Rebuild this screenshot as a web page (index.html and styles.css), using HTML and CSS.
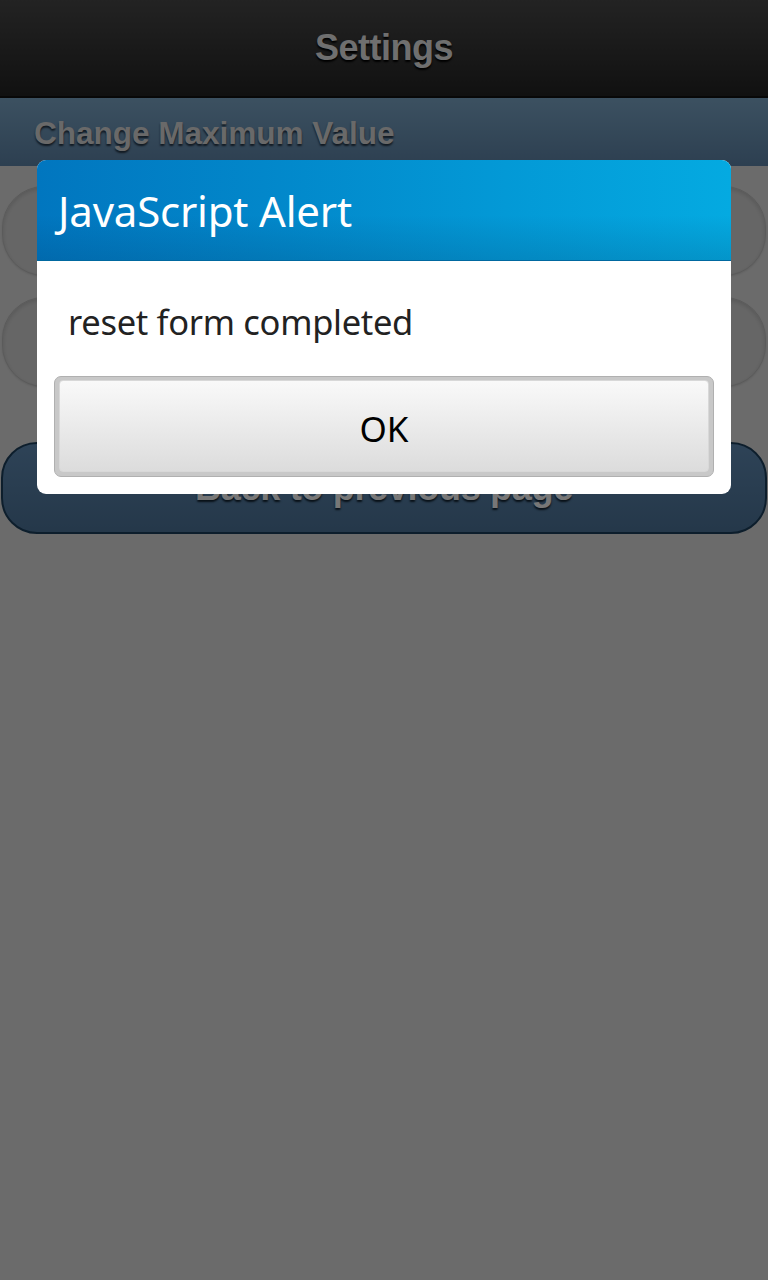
FILE: index.html
```html
<!DOCTYPE html>
<html>
<head>
<meta charset="utf-8">
<link rel="stylesheet" href="styles.css">
</head>
<body>
<div class="page">
  <header class="topbar"><h1 class="title">Settings</h1></header>
  <div class="section-bar">Change Maximum Value</div>
  <div class="content">
    <div class="field"></div>
    <div class="field"></div>
    <div class="back-btn">Back to previous page</div>
  </div>
</div>
<div class="dim"></div>
<div class="dialog">
  <div class="dialog-head">JavaScript Alert</div>
  <div class="dialog-body">
    <p class="message">reset form completed</p>
    <div class="ok-wrap"><div class="ok-btn">OK</div></div>
  </div>
</div>
</body>
</html>
```
FILE: styles.css
```css
html, body {
  margin: 0;
  padding: 0;
  width: 768px;
  height: 1280px;
  overflow: hidden;
  background: #d6d6d6;
}
.page {
  width: 768px;
  height: 1280px;
  background: #d6d6d6;
  font-family: "Liberation Sans", Arial, sans-serif;
}
.topbar {
  height: 96px;
  background: linear-gradient(to bottom, #464646, #222222);
  border-bottom: 2px solid #111;
  display: flex;
  align-items: center;
  justify-content: center;
}
.title {
  margin: 0;
  font-size: 36px;
  font-weight: bold;
  color: #dedede;
  text-shadow: 0 2px 2px #000;
  letter-spacing: -0.5px;
}
.section-bar {
  height: 68px;
  background: linear-gradient(to bottom, #78a2c2, #5a7fa2);
  box-sizing: border-box;
  padding-left: 34px;
  padding-top: 2px;
  display: flex;
  align-items: center;
  font-size: 31.5px;
  font-weight: bold;
  color: #d2d2d2;
  text-shadow: 0 2px 2px #203040;
}
.content {
  padding: 20px 2px 0 2px;
  display: flex;
  flex-direction: column;
}
.field {
  height: 88px;
  border-radius: 42px;
  background: #cdcdcd;
  border: 1px solid #b6b6b6;
  box-shadow: inset 0 2px 4px rgba(0,0,0,0.14), 0 1px 2px rgba(0,0,0,0.1);
  margin-bottom: 21px;
}
.field + .field {
  margin-bottom: 55px;
}
.back-btn {
  margin: 0 -1px;
  height: 88px;
  border-radius: 36px;
  background: linear-gradient(to bottom, #5c86ae, #4a7094);
  border: 2px solid #1a3c58;
  display: flex;
  align-items: center;
  justify-content: center;
  font-size: 36px;
  font-weight: bold;
  color: #eeeeee;
  text-shadow: 0 2px 2px #10202e;
  letter-spacing: -0.3px;
}
.dim {
  position: absolute;
  left: 0;
  top: 0;
  width: 768px;
  height: 1280px;
  background: rgba(0,0,0,0.5);
}
.dialog {
  position: absolute;
  left: 37px;
  top: 160px;
  width: 694px;
  height: 334px;
  border-radius: 9px;
  background: #fff;
  overflow: hidden;
  font-family: "Noto Sans", "Open Sans", sans-serif;
}
.dialog-head {
  height: 101px;
  box-sizing: border-box;
  border-bottom: 1px solid #0068a0;
  background:
    linear-gradient(to bottom, rgba(0,0,0,0) 55%, rgba(0,40,80,0.16) 100%),
    linear-gradient(to right, #0176bf, #04aae1);
  color: #fff;
  font-size: 42px;
  padding-left: 21px;
  display: flex;
  align-items: center;
  letter-spacing: -0.2px;
}
.dialog-body {
  padding: 0 17px;
}
.message {
  margin: 0;
  height: 115px;
  padding-left: 14px;
  padding-top: 6px;
  box-sizing: border-box;
  display: flex;
  align-items: center;
  font-size: 34.5px;
  color: #222;
  letter-spacing: -0.3px;
}
.ok-wrap {
  height: 101px;
  box-sizing: border-box;
  border-radius: 7px;
  background: #c8c8c8;
  border: 1px solid #b0b0b0;
  padding: 3px 4px 4px 4px;
}
.ok-btn {
  height: 100%;
  box-sizing: border-box;
  border-radius: 4px;
  border: 1px solid #d8d8d8;
  background: linear-gradient(to bottom, #f9f9f9, #dcdcdc);
  display: flex;
  align-items: center;
  justify-content: center;
  padding-top: 4px;
  font-size: 35px;
  color: #000;
}
```
